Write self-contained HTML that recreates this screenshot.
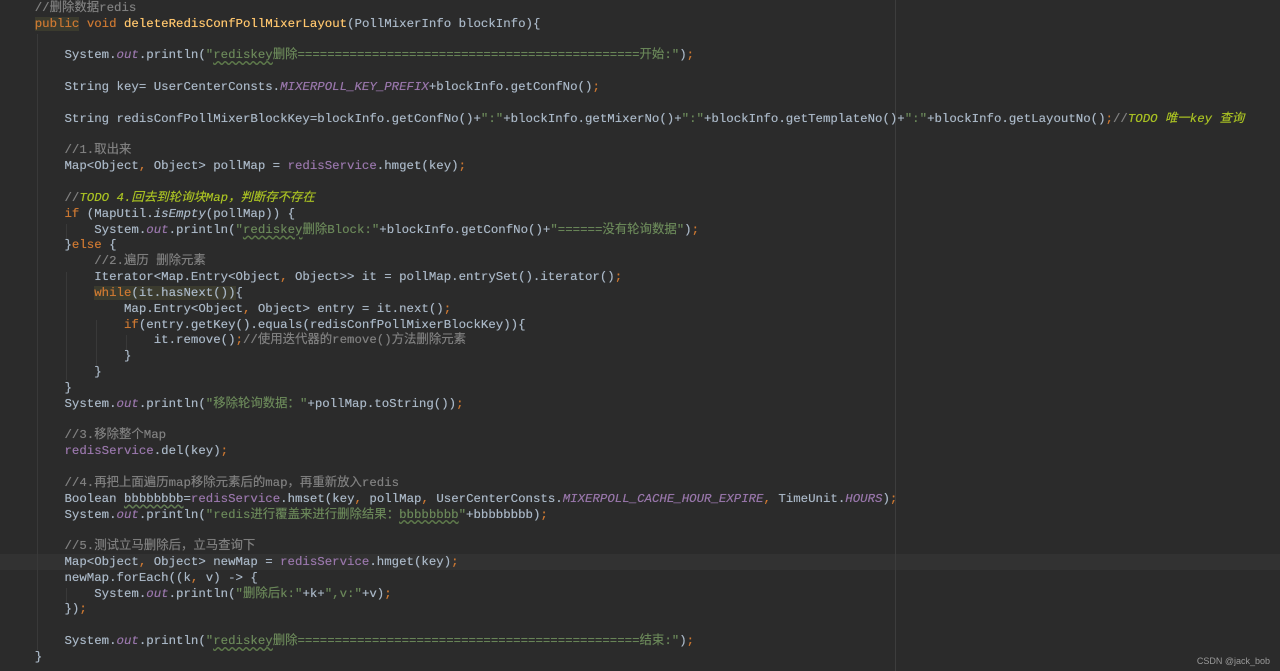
<!DOCTYPE html>
<html><head><meta charset="utf-8">
<style>
html,body{margin:0;padding:0;background:#2b2b2b;width:1280px;height:671px;overflow:hidden;position:relative}
pre{position:absolute;left:5px;top:1px;margin:0;font-family:"Liberation Mono","Noto Sans CJK SC",monospace;font-size:12.4px;line-height:15.83px;color:#a9b7c6;white-space:pre;text-shadow:0 0 0.4px currentColor}
.k{color:#cc7832}.m{color:#ffc66d}.s{color:#6a8759}.c{color:#808080}.f{color:#9876aa;font-style:italic}.p{color:#9876aa}
.t{color:#a8c023;font-style:italic}.i{font-style:italic}
.hl{background:#3b3b2e}
.u{text-decoration:underline wavy #5e7a4a;text-underline-offset:2px}
.cur{position:absolute;left:0;top:554px;width:1280px;height:16px;background:#323232}
.marg{position:absolute;left:895px;top:0;width:1px;height:671px;background:#3d3d3d}
.g{position:absolute;width:1px;background:#393939}
.wm{position:absolute;right:10px;bottom:5px;font:9px "Liberation Sans",sans-serif;color:#9a9a9a}
</style></head><body>
<div class="cur"></div>
<div class="marg"></div>
<div class="g" style="left:37px;top:34px;height:616px"></div>
<div class="g" style="left:66px;top:224px;height:16px"></div>
<div class="g" style="left:66px;top:272px;height:108px"></div>
<div class="g" style="left:96px;top:320px;height:46px"></div>
<div class="g" style="left:126px;top:335px;height:16px"></div>
<div class="g" style="left:66px;top:588px;height:16px"></div>
<pre>    <span class="c">//删除数据redis</span>
    <span class="k hl">public</span> <span class="k">void</span> <span class="m">deleteRedisConfPollMixerLayout</span>(PollMixerInfo blockInfo){

        System.<span class="f">out</span>.println(<span class="s">"<span class="u">rediskey</span>删除==============================================开始:"</span>)<span class="k">;</span>

        String key= UserCenterConsts.<span class="f">MIXERPOLL_KEY_PREFIX</span>+blockInfo.getConfNo()<span class="k">;</span>

        String redisConfPollMixerBlockKey=blockInfo.getConfNo()+<span class="s">":"</span>+blockInfo.getMixerNo()+<span class="s">":"</span>+blockInfo.getTemplateNo()+<span class="s">":"</span>+blockInfo.getLayoutNo()<span class="k">;</span><span class="c">//</span><span class="t">TODO 唯一key 查询</span>

        <span class="c">//1.取出来</span>
        Map&lt;Object<span class="k">,</span> Object&gt; pollMap = <span class="p">redisService</span>.hmget(key)<span class="k">;</span>

        <span class="c">//</span><span class="t">TODO 4.回去到轮询块Map，判断存不存在</span>
        <span class="k">if</span> (MapUtil.<span class="i">isEmpty</span>(pollMap)) {
            System.<span class="f">out</span>.println(<span class="s">"<span class="u">rediskey</span>删除Block:"</span>+blockInfo.getConfNo()+<span class="s">"======没有轮询数据"</span>)<span class="k">;</span>
        }<span class="k">else</span> {
            <span class="c">//2.遍历 删除元素</span>
            Iterator&lt;Map.Entry&lt;Object<span class="k">,</span> Object&gt;&gt; it = pollMap.entrySet().iterator()<span class="k">;</span>
            <span class="hl"><span class="k">while</span>(it.hasNext())</span>{
                Map.Entry&lt;Object<span class="k">,</span> Object&gt; entry = it.next()<span class="k">;</span>
                <span class="k">if</span>(entry.getKey().equals(redisConfPollMixerBlockKey)){
                    it.remove()<span class="k">;</span><span class="c">//使用迭代器的remove()方法删除元素</span>
                }
            }
        }
        System.<span class="f">out</span>.println(<span class="s">"移除轮询数据："</span>+pollMap.toString())<span class="k">;</span>

        <span class="c">//3.移除整个Map</span>
        <span class="p">redisService</span>.del(key)<span class="k">;</span>

        <span class="c">//4.再把上面遍历map移除元素后的map，再重新放入redis</span>
        Boolean <span class="u">bbbbbbbb</span>=<span class="p">redisService</span>.hmset(key<span class="k">,</span> pollMap<span class="k">,</span> UserCenterConsts.<span class="f">MIXERPOLL_CACHE_HOUR_EXPIRE</span><span class="k">,</span> TimeUnit.<span class="f">HOURS</span>)<span class="k">;</span>
        System.<span class="f">out</span>.println(<span class="s">"redis进行覆盖来进行删除结果：<span class="u">bbbbbbbb</span>"</span>+bbbbbbbb)<span class="k">;</span>

        <span class="c">//5.测试立马删除后，立马查询下</span>
        Map&lt;Object<span class="k">,</span> Object&gt; newMap = <span class="p">redisService</span>.hmget(key)<span class="k">;</span>
        newMap.forEach((k<span class="k">,</span> v) -&gt; {
            System.<span class="f">out</span>.println(<span class="s">"删除后k:"</span>+k+<span class="s">",v:"</span>+v)<span class="k">;</span>
        })<span class="k">;</span>

        System.<span class="f">out</span>.println(<span class="s">"<span class="u">rediskey</span>删除==============================================结束:"</span>)<span class="k">;</span>
    }</pre>
<div class="wm">CSDN @jack_bob</div>
</body></html>
